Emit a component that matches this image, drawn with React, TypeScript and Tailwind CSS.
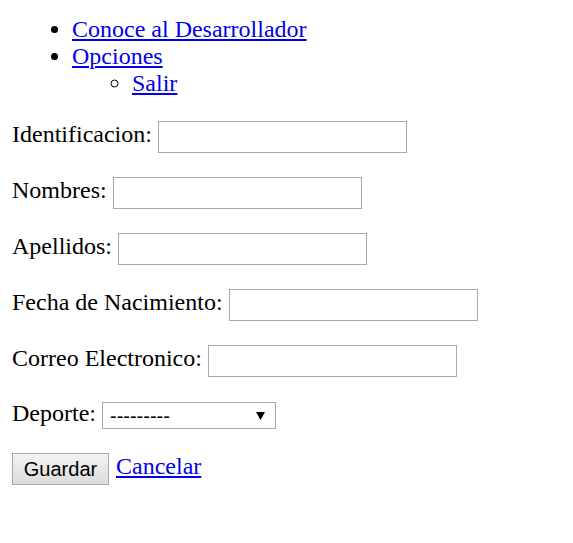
const fields = [
  { label: "Identificacion:" },
  { label: "Nombres:" },
  { label: "Apellidos:" },
  { label: "Fecha de Nacimiento:" },
  { label: "Correo Electronico:" },
];

export default function App() {
  return (
    <div className="min-h-[543px] bg-white px-[12px] pt-[16px] text-[24px] leading-[normal] text-black [font-family:'Liberation_Serif','Times_New_Roman',serif]">
      {/* Menu */}
      <ul className="list-disc pl-[60px]">
        <li>
          <a href="#" className="text-[#0000ee] underline">
            Conoce al Desarrollador
          </a>
        </li>
        <li>
          <a href="#" className="text-[#0000ee] underline">
            Opciones
          </a>
          <ul className="list-[circle] pl-[60px]">
            <li>
              <a href="#" className="text-[#0000ee] underline">
                Salir
              </a>
            </li>
          </ul>
        </li>
      </ul>

      {/* Form */}
      <form className="mt-[24px] flex flex-col gap-[24px]">
        {fields.map((f) => (
          <div key={f.label} className="flex h-[32px] items-start gap-[6px]">
            <label>{f.label}</label>
            <input
              type="text"
              className="h-[32px] w-[249px] border border-[#a9a9a9] bg-white px-[3px] text-[20px] [font-family:'Liberation_Sans',Arial,sans-serif]"
            />
          </div>
        ))}

        <div className="flex h-[28px] items-start gap-[6px]">
          <label className="-mt-[1px]">Deporte:</label>
          <div className="mt-[1px] flex h-[27px] w-[174px] items-center justify-between border border-[#a9a9a9] bg-white pl-[7px] pr-[10px] text-[20px] leading-none [font-family:'Liberation_Sans',Arial,sans-serif]">
            <span>---------</span>
            <svg width="9" height="9" viewBox="0 0 9 9">
              <polygon points="0,1 9,1 4.5,9" fill="#000" />
            </svg>
          </div>
        </div>

        <div className="flex h-[32px] items-start gap-[7px]">
          <button
            type="button"
            className="h-[32px] w-[97px] border border-[#a9a9a9] bg-gradient-to-b from-[#f3f3f3] to-[#dcdcdc] text-[20px] leading-none text-black [font-family:'Liberation_Sans',Arial,sans-serif]"
          >
            Guardar
          </button>
          <a href="#" className="text-[#0000ee] underline">
            Cancelar
          </a>
        </div>
      </form>
    </div>
  );
}
